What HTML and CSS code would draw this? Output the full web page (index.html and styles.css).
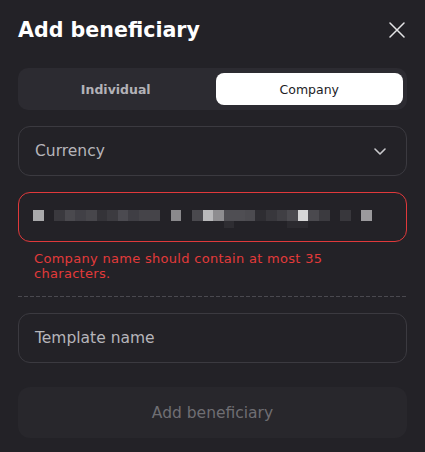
FILE: index.html
```html
<!DOCTYPE html>
<html>
<head>
<meta charset="utf-8">
<link rel="stylesheet" href="styles.css">
</head>
<body>
<div class="modal">
  <header class="head">
    <h1 class="title">Add beneficiary</h1>
    <button class="close" aria-label="Close">
      <svg width="16" height="16" viewBox="0 0 16 16"><path d="M1 1L15 15M15 1L1 15" stroke="#e4e4e6" stroke-width="1.5" stroke-linecap="round"/></svg>
    </button>
  </header>

  <div class="tabs">
    <div class="tab">Individual</div>
    <div class="tab active">Company</div>
  </div>

  <div class="field select">
    <span class="placeholder">Currency</span>
    <svg class="chev" width="12" height="7" viewBox="0 0 12 7"><path d="M1 1L6 6L11 1" fill="none" stroke="#c9c9cc" stroke-width="1.6" stroke-linecap="round" stroke-linejoin="round"/></svg>
  </div>

  <div class="group">
    <div class="field error">
      <div class="mosaic">
        <div class="mrow">
          <span class="cell" style="background:#a9a9ab"></span>
          <span class="cell"></span>
          <span class="cell" style="background:#3a393e"></span>
          <span class="cell" style="background:#4a494e"></span>
          <span class="cell" style="background:#414046"></span>
          <span class="cell" style="background:#47464b"></span>
          <span class="cell" style="background:#343338"></span>
          <span class="cell" style="background:#3c3b40"></span>
          <span class="cell" style="background:#4b4a50"></span>
          <span class="cell" style="background:#3f3e44"></span>
          <span class="cell" style="background:#454449"></span>
          <span class="cell" style="background:#454449"></span>
          <span class="cell"></span>
          <span class="cell" style="background:#8a898c"></span>
          <span class="cell"></span>
          <span class="cell" style="background:#4a494e"></span>
          <span class="cell" style="background:#b9b9bb"></span>
          <span class="cell" style="background:#8e8d90"></span>
          <span class="cell" style="background:#4f4e53"></span>
          <span class="cell" style="background:#4f4e53"></span>
          <span class="cell" style="background:#4c4b50"></span>
          <span class="cell" style="background:#2e2d32"></span>
          <span class="cell" style="background:#38373c"></span>
          <span class="cell" style="background:#403f44"></span>
          <span class="cell" style="background:#4b4a4f"></span>
          <span class="cell" style="background:#d6d6d7"></span>
          <span class="cell" style="background:#4a494e"></span>
          <span class="cell" style="background:#3b3a3f"></span>
          <span class="cell"></span>
          <span class="cell" style="background:#38373c"></span>
          <span class="cell"></span>
          <span class="cell" style="background:#9b9a9d"></span>
        </div>
        <div class="mrow low">
          <span class="cell"></span><span class="cell"></span><span class="cell"></span><span class="cell"></span>
          <span class="cell"></span><span class="cell"></span><span class="cell"></span><span class="cell"></span>
          <span class="cell"></span><span class="cell"></span><span class="cell"></span><span class="cell"></span>
          <span class="cell"></span><span class="cell"></span><span class="cell"></span><span class="cell"></span>
          <span class="cell"></span><span class="cell"></span>
          <span class="cell" style="background:#2e2d32"></span>
          <span class="cell"></span><span class="cell"></span><span class="cell"></span><span class="cell"></span><span class="cell"></span>
          <span class="cell" style="background:#2b2a2f"></span>
          <span class="cell" style="background:#2b2a2f"></span>
        </div>
      </div>
    </div>
    <p class="err-msg">Company name should contain at most 35 characters.</p>
  </div>

  <div class="divider"></div>

  <div class="field">
    <span class="placeholder">Template name</span>
  </div>

  <button class="submit" disabled>Add beneficiary</button>
</div>
</body>
</html>
```

FILE: styles.css
```css
* { box-sizing: border-box; }
html, body {
  margin: 0;
  padding: 0;
  background: #232227;
}
body {
  font-family: "DejaVu Sans", Inter, sans-serif;
  color: #fff;
}
.modal {
  width: 425px;
  height: 452px;
  padding: 12px 18px 0 18px;
  display: flex;
  flex-direction: column;
}
.head {
  display: flex;
  align-items: center;
  justify-content: space-between;
  height: 36px;
}
.title {
  margin: 0;
  font-size: 20.6px;
  font-weight: 700;
  color: #fff;
  letter-spacing: 0;
}
.close {
  background: none;
  border: 0;
  padding: 0;
  margin-right: 2px;
  width: 16px;
  height: 16px;
  display: flex;
}
.tabs {
  margin-top: 20px;
  height: 42px;
  background: #2c2b31;
  border-radius: 10px;
  padding: 5px 4px;
  display: grid;
  grid-template-columns: 1fr 1fr;
  column-gap: 6px;
}
.tab {
  display: flex;
  align-items: center;
  justify-content: center;
  font-size: 12.5px;
  font-weight: 700;
  color: #b3b2b7;
  border-radius: 8px;
}
.tab.active {
  background: #fff;
  color: #1c1c1f;
  font-weight: 400;
}
.field {
  height: 50px;
  border: 1px solid #3b3a40;
  border-radius: 12px;
  padding: 0 16px;
  display: flex;
  align-items: center;
}
.select {
  margin-top: 16px;
  justify-content: space-between;
}
.placeholder {
  font-size: 15.5px;
  color: #b6b5ba;
}
.chev { margin-right: 4px; }
.group { margin-top: 16px; }
.field.error {
  border-color: #e0393b;
  padding: 0 0 0 14px;
  align-items: flex-start;
}
.mosaic {
  margin-top: 17px;
  display: flex;
  flex-direction: column;
}
.mrow { display: flex; }
.cell {
  display: block;
  width: 10.6px;
  height: 11px;
}
.mrow.low .cell { height: 7px; }
.err-msg {
  margin: 9px 0 0 0;
  padding: 0 16px;
  font-size: 13px;
  line-height: 15px;
  letter-spacing: 0.3px;
  color: #e23a3a;
}
.divider {
  margin-top: 15px;
  height: 1px;
  background: repeating-linear-gradient(to right, #4a494f 0 4px, transparent 4px 6px);
}
.divider + .field { margin-top: 16px; }
.submit {
  margin-top: 24px;
  height: 51px;
  border: 0;
  border-radius: 12px;
  background: #28272c;
  color: #6f6e73;
  font-family: inherit;
  font-size: 15.5px;
}
```
